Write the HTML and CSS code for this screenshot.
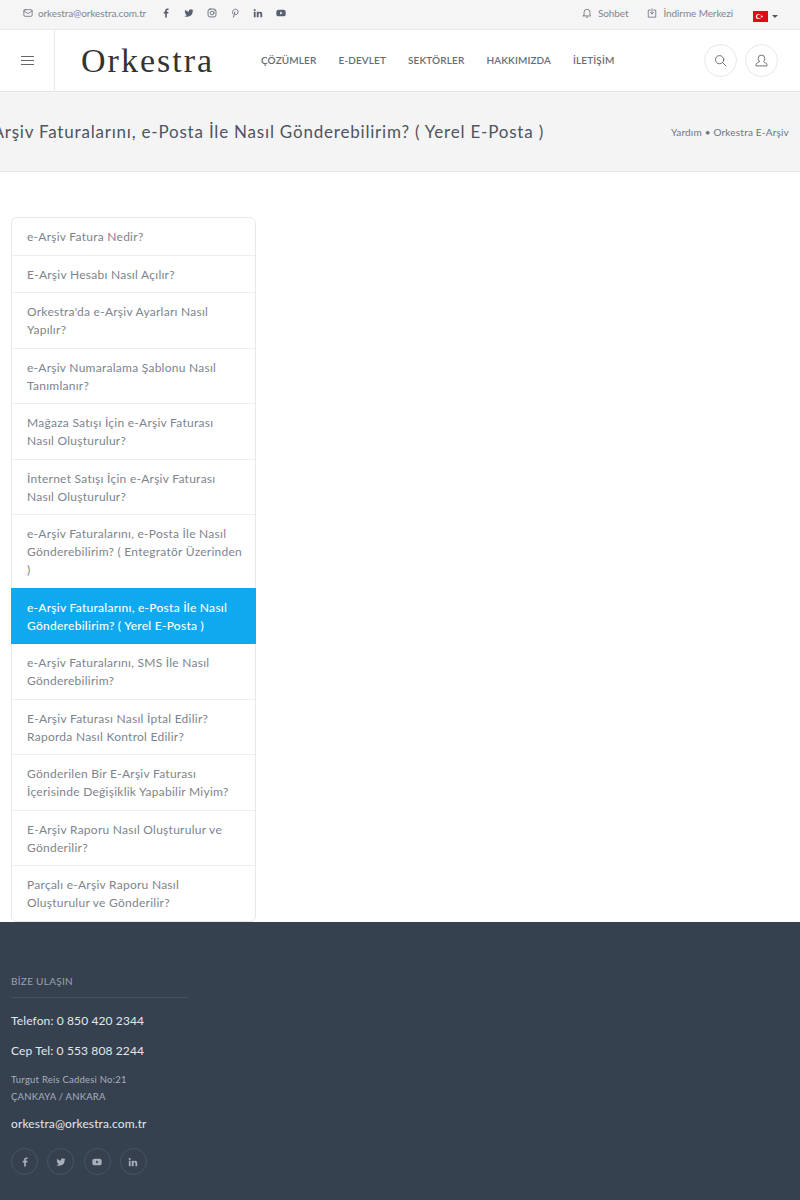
FILE: index.html
```html
<!DOCTYPE html>
<html lang="tr">
<head>
  <meta charset="UTF-8">
  <meta name="viewport" content="width=device-width, initial-scale=1.0">
  <title>Orkestra - e-Arşiv Faturalarını, e-Posta İle Nasıl Gönderebilirim?</title>
  <link rel="stylesheet" href="styles.css">
</head>
<body>

  <div class="topbar">
    <div class="top-left">
      <a class="top-mail">
        <svg class="ic" viewBox="0 0 24 24"><rect x="2" y="4" width="20" height="16" rx="3"/><path d="M2.5 7l9.5 6.500 9.500-6.500"/></svg>
        orkestra@orkestra.com.tr
      </a>
      <div class="top-social">
        <svg class="sc" viewBox="0 0 24 24"><path class="fill" d="M14 23v-10h3.400l.6-4h-4V6.600c0-1.200.4-2 2-2h2.100V1.100C17.700 1 16.500 1 15.300 1 12.300 1 10 2.900 10 6.200V9H6.500v4H10v10z"/></svg>
        <svg class="sc" viewBox="0 0 24 24"><path class="fill" d="M23 5.200c-.8.400-1.700.6-2.600.7 1-.6 1.700-1.500 2-2.500-.9.500-1.900.9-2.900 1.100a4.500 4.500 0 0 0-7.700 4.100C8 8.400 4.700 6.600 2.500 3.900c-1.200 2.100-.6 4.700 1.400 6-.7 0-1.400-.2-2-.6 0 2.200 1.500 4.100 3.600 4.500-.7.200-1.400.2-2 .1.600 1.800 2.300 3.100 4.200 3.100A9 9 0 0 1 1 18.900 12.800 12.800 0 0 0 20.700 7.500c.9-.6 1.700-1.400 2.300-2.300z"/></svg>
        <svg class="sc" viewBox="0 0 24 24"><rect x="2.500" y="2.500" width="19" height="19" rx="5"/><circle cx="12" cy="12" r="4.500"/><circle class="fill" cx="17.500" cy="6.500" r="1.200"/></svg>
        <svg class="sc" viewBox="0 0 24 24"><path d="M8.500 22l3-12.500M6.800 14C4 9.500 7.500 3 13 3c4.500 0 6.800 3 6.300 7-.5 3.500-2.500 6-5.200 6-1.500 0-2.600-1-3-2.300"/></svg>
        <svg class="sc" viewBox="0 0 24 24"><path class="fill" d="M2 9h4.300v13H2zM4.100 2.200a2.400 2.400 0 1 1 0 4.900 2.400 2.400 0 0 1 0-4.900zM9 9h4.100v1.800c.6-1.100 2-2.100 4-2.100 4.300 0 5 2.700 5 6.300V22h-4.300v-6.200c0-1.500 0-3.300-2-3.300s-2.300 1.600-2.300 3.200V22H9z"/></svg>
        <svg class="sc" viewBox="0 0 24 24"><path class="fill" d="M23 7.500c-.2-1.700-1.300-2.800-3-3C17.500 4.200 14.700 4 12 4s-5.500.2-8 .5c-1.700.2-2.800 1.300-3 3-.3 3-.3 6 0 9 .2 1.700 1.300 2.800 3 3 2.500.3 5.300.5 8 .5s5.500-.2 8-.5c1.700-.2 2.800-1.300 3-3 .3-3 .3-6 0-9zM10 15.500v-7l6 3.500z"/></svg>
      </div>
    </div>
    <div class="top-right">
      <a class="top-link">
        <svg class="ic" viewBox="0 0 24 24"><path d="M5 17v-7a7 7 0 0 1 14 0v7l2 2H3zM10 22h4"/></svg>
        Sohbet
      </a>
      <a class="top-link">
        <svg class="ic" viewBox="0 0 24 24"><path d="M8 5H3v17h18V5h-5M12 2v12M8 10.500l4 4 4-4"/></svg>
        İndirme Merkezi
      </a>
      <div class="lang">
        <svg class="flag" viewBox="0 0 15 11"><rect width="15" height="11" fill="#e30a17"/><circle cx="5.500" cy="5.500" r="2.600" fill="#fff"/><circle cx="6.200" cy="5.500" r="2.100" fill="#e30a17"/><circle cx="8.800" cy="5.500" r=".9" fill="#fff"/></svg>
        <span class="caret"></span>
      </div>
    </div>
  </div>

  <header class="header">
    <div class="burger"><span></span><span></span><span></span></div>
    <a class="logo">Orkestra</a>
    <nav class="nav">
      <a>ÇÖZÜMLER</a>
      <a>E-DEVLET</a>
      <a>SEKTÖRLER</a>
      <a>HAKKIMIZDA</a>
      <a>İLETİŞİM</a>
    </nav>
    <div class="head-btns">
      <a class="round">
        <svg viewBox="0 0 24 24"><circle cx="10.500" cy="10.500" r="7.500"/><path d="M16 16l6 6"/></svg>
      </a>
      <a class="round">
        <svg viewBox="0 0 24 24"><path d="M8 14c-1.500-2-2-3.500-2-6a6 6 0 0 1 12 0c0 2.500-.5 4-2 6 0 2 6 2 6 5v3H2v-3c0-3 6-3 6-5z"/></svg>
      </a>
    </div>
  </header>

  <section class="page-title">
    <div class="title-box">
      <h1>e-Arşiv Faturalarını, e-Posta İle Nasıl Gönderebilirim? ( Yerel E-Posta )</h1>
    </div>
    <div class="crumbs">Yardım • Orkestra E-Arşiv</div>
  </section>

  <main class="content">
    <ul class="side-list">
      <li>e-Arşiv Fatura Nedir?</li>
      <li>E-Arşiv Hesabı Nasıl Açılır?</li>
      <li>Orkestra'da e-Arşiv Ayarları Nasıl Yapılır?</li>
      <li>e-Arşiv Numaralama Şablonu Nasıl Tanımlanır?</li>
      <li>Mağaza Satışı İçin e-Arşiv Faturası Nasıl Oluşturulur?</li>
      <li>İnternet Satışı İçin e-Arşiv Faturası Nasıl Oluşturulur?</li>
      <li>e-Arşiv Faturalarını, e-Posta İle Nasıl Gönderebilirim? ( Entegratör Üzerinden )</li>
      <li class="active">e-Arşiv Faturalarını, e-Posta İle Nasıl Gönderebilirim? ( Yerel E-Posta )</li>
      <li>e-Arşiv Faturalarını, SMS İle Nasıl Gönderebilirim?</li>
      <li>E-Arşiv Faturası Nasıl İptal Edilir? Raporda Nasıl Kontrol Edilir?</li>
      <li>Gönderilen Bir E-Arşiv Faturası İçerisinde Değişiklik Yapabilir Miyim?</li>
      <li>E-Arşiv Raporu Nasıl Oluşturulur ve Gönderilir?</li>
      <li>Parçalı e-Arşiv Raporu Nasıl Oluşturulur ve Gönderilir?</li>
    </ul>
  </main>

  <footer class="footer">
    <h4>BİZE ULAŞIN</h4>
    <p class="f-big">Telefon: 0 850 420 2344</p>
    <p class="f-big">Cep Tel: 0 553 808 2244</p>
    <p class="f-addr">Turgut Reis Caddesi No:21<br>ÇANKAYA / ANKARA</p>
    <p class="f-big">orkestra@orkestra.com.tr</p>
    <div class="f-social">
      <a><svg viewBox="0 0 24 24"><path d="M14 23v-10h3.400l.6-4h-4V6.600c0-1.200.4-2 2-2h2.100V1.100C17.700 1 16.500 1 15.300 1 12.300 1 10 2.900 10 6.200V9H6.500v4H10v10z"/></svg></a>
      <a><svg viewBox="0 0 24 24"><path d="M23 5.200c-.8.400-1.700.6-2.600.7 1-.6 1.700-1.500 2-2.500-.9.500-1.900.9-2.900 1.100a4.500 4.500 0 0 0-7.700 4.100C8 8.400 4.700 6.600 2.500 3.900c-1.200 2.100-.6 4.700 1.400 6-.7 0-1.400-.2-2-.6 0 2.200 1.500 4.100 3.600 4.500-.7.200-1.400.2-2 .1.600 1.800 2.300 3.100 4.200 3.100A9 9 0 0 1 1 18.900 12.800 12.800 0 0 0 20.700 7.500c.9-.6 1.700-1.400 2.300-2.300z"/></svg></a>
      <a><svg viewBox="0 0 24 24"><path d="M23 7.500c-.2-1.700-1.300-2.800-3-3C17.500 4.200 14.700 4 12 4s-5.500.2-8 .5c-1.700.2-2.800 1.300-3 3-.3 3-.3 6 0 9 .2 1.700 1.300 2.800 3 3 2.500.3 5.300.5 8 .5s5.500-.2 8-.5c1.700-.2 2.800-1.300 3-3 .3-3 .3-6 0-9zM10 15.500v-7l6 3.500z"/></svg></a>
      <a><svg viewBox="0 0 24 24"><path d="M2 9h4.300v13H2zM4.100 2.200a2.400 2.400 0 1 1 0 4.900 2.400 2.400 0 0 1 0-4.900zM9 9h4.100v1.800c.6-1.100 2-2.100 4-2.100 4.300 0 5 2.700 5 6.300V22h-4.300v-6.200c0-1.500 0-3.300-2-3.300s-2.300 1.600-2.300 3.200V22H9z"/></svg></a>
    </div>
  </footer>

</body>
</html>
```

FILE: styles.css
```css
*{box-sizing:border-box}
html,body{margin:0;padding:0}
body{width:800px;height:1200px;overflow:hidden;background:#fff;color:#6c757d;font-family:"Lato","Open Sans",sans-serif;font-size:13px}
svg{display:block;fill:none;stroke:currentColor;stroke-width:2;stroke-linecap:round;stroke-linejoin:round}
svg .fill{fill:currentColor;stroke:none}

/* ust serit */
.topbar{height:30px;background:#f5f5f6;border-bottom:1px solid #e9e9eb;display:flex;justify-content:space-between;align-items:center;padding:0 22px 3px 23px;font-size:10px;letter-spacing:-.1px;color:#80868f}
.top-left,.top-right{display:flex;align-items:center}
.top-mail,.top-link{display:flex;align-items:center;gap:6px}
.top-mail{gap:5px}
.ic{width:10px;height:10px;stroke-width:1.800;color:#5b6470;flex:none}
.top-social{display:flex;gap:13px;margin-left:15px;color:#566070}
.sc{width:10px;height:10px}
.top-link{margin-right:19px}
.top-link:nth-child(2){margin-right:20px}
.lang{display:flex;align-items:center;gap:4px;margin-top:7px}
.flag{width:15px;height:11px;stroke:none}
.caret{width:0;height:0;border:3px solid transparent;border-top-color:#555;border-bottom:0}

/* menu */
.header{height:62px;background:#fff;border-bottom:1px solid #e4e4e6;display:flex;align-items:center}
.burger{width:55px;height:61px;border-right:1px solid #e9e9eb;display:flex;flex-direction:column;justify-content:center;gap:2.500px;padding-left:21px}
.burger span{display:block;width:13px;height:1.500px;background:#666}
.logo{width:206px;padding-left:26px;font-family:"Liberation Serif",serif;font-size:34px;letter-spacing:2px;color:#333}
.nav{display:flex;gap:22px;padding-bottom:2px;font-size:10px;font-weight:600;color:#666d77;letter-spacing:.12px}
.head-btns{margin-left:auto;margin-right:22px;display:flex;gap:8px}
.round{width:33px;height:33px;border:1px solid #e8e8ea;border-radius:50%;display:flex;align-items:center;justify-content:center;color:#666}
.round svg{width:13px;height:13px;stroke-width:1.700}

/* sayfa basligi */
.page-title{height:80px;background:#f4f4f5;border-bottom:1px solid #e7e7e9;display:flex;align-items:center;justify-content:space-between;padding-right:11px;margin-bottom:45px}
.title-box{width:544px;display:flex;justify-content:flex-end;white-space:nowrap}
.page-title h1{margin:0;font-size:17px;font-weight:400;color:#4d5560;letter-spacing:.8px;flex:none}
.crumbs{font-size:10px;color:#6c757d;letter-spacing:.2px}

/* liste */
.content{padding:0 0 0 11px;height:705px}
.side-list{list-style:none;margin:0;padding:0;width:245px;border:1px solid #e8e8ea;border-radius:6px}
.side-list li{padding:10px 12px 8.500px 15px;line-height:18px;font-size:12px;letter-spacing:.26px;color:#7d848d;border-bottom:1px solid #eeeef0}
.side-list li:last-child{border-bottom:0}
.side-list li.active{background:#0fa9f0;color:#fff;font-weight:500;margin:-1px -1px 0;padding:11px 16px 8.500px;border-bottom:1px solid #0fa9f0}

/* alt kisim */
.footer{height:278px;background:#364150;padding:53px 11px 0;color:#e4e7ea}
.footer h4{margin:0 0 15px;width:177px;padding-bottom:10px;border-bottom:1px solid #475160;font-size:10px;font-weight:400;color:#99a1ab;letter-spacing:.3px}
.f-big{margin:0 0 14px;font-size:12px;line-height:16px;letter-spacing:.12px}
.f-addr{margin:-2px 0 11px;font-size:9.500px;line-height:17px;color:#a8afb8;letter-spacing:.22px}
.f-social{display:flex;gap:9.300px;margin-top:16px}
.f-social a{width:27px;height:27px;border:1px solid #4a5463;border-radius:50%;display:flex;align-items:center;justify-content:center;color:#a8afb8}
.f-social svg{width:10px;height:10px;fill:currentColor;stroke:none}
```
